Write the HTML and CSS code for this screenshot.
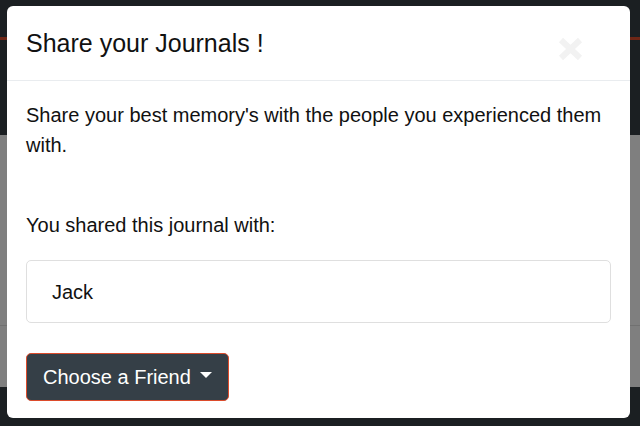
FILE: index.html
```html
<!DOCTYPE html>
<html>
<head>
<meta charset="utf-8">
<link rel="stylesheet" href="styles.css">
</head>
<body>
<div class="page">
  <header class="topbar"><div class="stripe"></div></header>
  <main class="content">
    <div class="content-upper"></div>
    <div class="content-lower"></div>
  </main>
  <footer class="footer"></footer>
</div>

<div class="modal">
  <div class="modal-header">
    <h5 class="modal-title">Share your Journals !</h5>
    <button class="close" aria-label="Close">
      <svg width="25" height="24" viewBox="0 0 25 24"><path d="M3 3 L22 21 M22 3 L3 21" stroke="#f2f2f2" stroke-width="6" stroke-linecap="butt"/></svg>
    </button>
  </div>
  <div class="modal-body">
    <p class="intro">Share your best memory's with the people you experienced them with.</p>
    <p class="label">You shared this journal with:</p>
    <div class="shared-box">Jack</div>
    <button class="friend-btn">Choose a Friend<span class="caret"></span></button>
  </div>
</div>
</body>
</html>
```

FILE: styles.css
```css
html, body {
  margin: 0;
  padding: 0;
}
body {
  width: 640px;
  height: 426px;
  overflow: hidden;
  font-family: "Liberation Sans", Arial, sans-serif;
  color: #212529;
  background: #1b1f22;
}
.page {
  display: flex;
  flex-direction: column;
  height: 426px;
}
.topbar {
  height: 135px;
  background: #1b1f22;
  padding-top: 37px;
  box-sizing: border-box;
}
.stripe {
  height: 3px;
  background: #6e2616;
}
.content {
  display: flex;
  flex-direction: column;
  height: 252px;
  background: #7f7f7f;
}
.content-upper {
  height: 190px;
  border-bottom: 1px solid #717171;
}
.content-lower {
  flex: 1;
}
.footer {
  flex: 1;
  background: #1b1f22;
}

.modal {
  position: absolute;
  left: 7px;
  top: 6px;
  width: 623px;
  height: 412px;
  background: #fff;
  border-radius: 6px;
  box-sizing: border-box;
  display: flex;
  flex-direction: column;
}
.modal-header {
  display: flex;
  align-items: flex-start;
  justify-content: space-between;
  padding: 19px 19px 18px 19px;
  border-bottom: 1px solid #e9ecef;
}
.modal-title {
  margin: 0;
  font-size: 25px;
  font-weight: 400;
  line-height: 37px;
  color: #111;
}
.close {
  background: none;
  border: 0;
  padding: 0;
  margin: 12px 28px 0 0;
  width: 25px;
  height: 24px;
  display: block;
}
.close svg {
  display: block;
}
.modal-body {
  padding: 19px 19px 18px 19px;
  font-size: 20px;
  line-height: 30px;
  color: #111;
}
.intro {
  margin: 0 0 50px 0;
}
.label {
  margin: 0 0 20px 0;
}
.shared-box {
  border: 1px solid #dfdfdf;
  border-radius: 5px;
  padding: 16px 25px 15px;
  line-height: 30px;
}
.friend-btn {
  margin-top: 30px;
  display: inline-flex;
  align-items: center;
  font-family: "Liberation Sans", Arial, sans-serif;
  font-size: 20px;
  line-height: 30px;
  color: #fff;
  background: #353f47;
  border: 1px solid #dc4b2b;
  border-radius: 5px;
  padding: 8px 16px 8px 16px;
}
.caret {
  display: inline-block;
  margin-left: 9px;
  width: 0;
  height: 0;
  border-top: 6px solid #fff;
  border-left: 6px solid transparent;
  border-right: 6px solid transparent;
  margin-top: -4px;
}
```
